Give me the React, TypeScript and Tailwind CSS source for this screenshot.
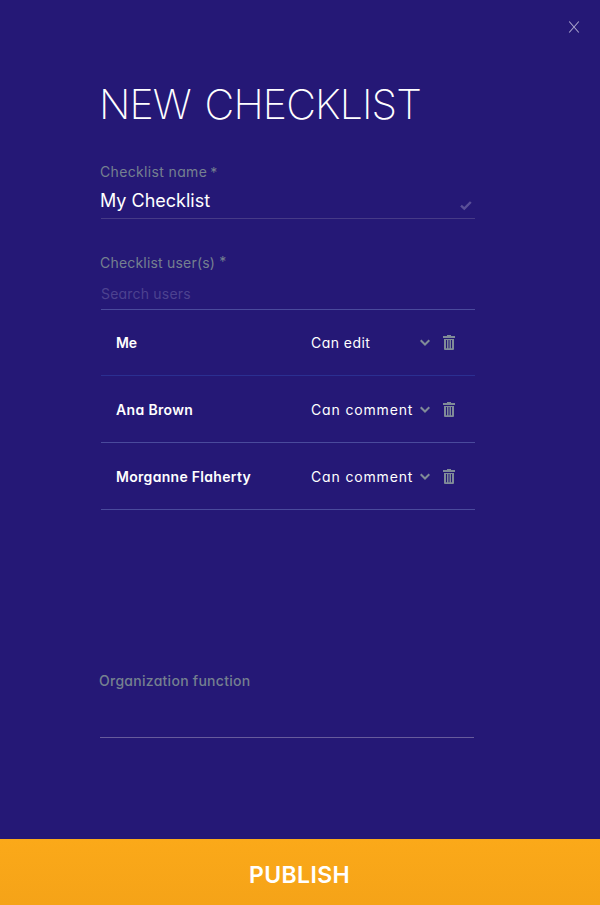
const users = [
  { name: "Me", permission: "Can edit", nameClass: "tracking-[-0.1px]", permissionClass: "tracking-[0.45px]", border: "h-[66px] border-[#2b2f91]" },
  { name: "Ana Brown", permission: "Can comment", nameClass: "tracking-[0.35px]", permissionClass: "tracking-[0.85px]", border: "h-[67px] pt-px border-[#4a4a9c]" },
  { name: "Morganne Flaherty", permission: "Can comment", nameClass: "tracking-[0.3px]", permissionClass: "tracking-[0.85px]", border: "h-[67px] pt-px border-[#4a4a9c]" },
];

const CloseIcon = () => (
  <svg className="w-3 h-3" viewBox="0 0 12 12" fill="none" stroke="#a9a3cc" strokeWidth="1.1">
    <path d="M1.2 0.5L10.8 11.5M10.8 0.5L1.2 11.5" />
  </svg>
);

const CheckIcon = () => (
  <svg className="w-3 h-[10px]" viewBox="0 0 12 10" fill="none" stroke="#5a4f98" strokeWidth="2.4">
    <path d="M1 4.6L4.3 7.6L10.8 1" />
  </svg>
);

const ChevronIcon = () => (
  <svg className="w-[10px] h-[7px]" viewBox="0 0 10 7" fill="none" stroke="#808b98" strokeWidth="2">
    <path d="M0.7 1.3L5 5.5L9.3 1.3" />
  </svg>
);

const TrashIcon = () => (
  <svg className="w-3 h-[15px]" viewBox="0 0 12 15" fill="#808b98">
    <path d="M4 0H8V1H12V3H0V1H4Z" />
    <path fillRule="evenodd" d="M1 4H11V14Q11 15 10 15H2Q1 15 1 14ZM3 5V13.3H4V5ZM5.5 5V13.3H6.5V5ZM8 5V13.3H9V5Z" />
  </svg>
);

export default function App() {
  return (
    <div className="flex flex-col w-[600px] h-[905px] bg-[#251876] text-white whitespace-nowrap font-['Inter','Open_Sans',sans-serif] [font-feature-settings:'cv11']">
      <header className="flex justify-end pt-[21px] pr-5 h-[84px]">
        <button aria-label="Close" className="h-3">
          <CloseIcon />
        </button>
      </header>

      <main className="flex flex-col flex-1 w-[375px] ml-[100px]">
        <h1 className="h-10 text-[41px] leading-10 font-extralight tracking-[-0.85px] [word-spacing:3px] -ml-px">NEW CHECKLIST</h1>

        <section className="mt-[38px]">
          <label className="flex h-5 text-sm leading-5 text-[#758090] tracking-[0.35px]">
            <span>Checklist name</span>
            <span className="ml-[3px] pt-px">*</span>
          </label>
          <div className="flex justify-between h-[37px] ml-px pt-[5px] border-b border-[#463a87]">
            <span className="text-lg leading-7 -ml-px">My Checklist</span>
            <span className="pt-[14px] pr-[3px]">
              <CheckIcon />
            </span>
          </div>
        </section>

        <section className="mt-[34px]">
          <label className="flex h-5 text-sm leading-5 text-[#758090] tracking-[0.2px]">
            <span>Checklist user(s)</span>
            <span className="ml-1 -mt-px">*</span>
          </label>
          <div className="h-[37px] ml-px pt-[11px] border-b border-[#4a4a9c] text-sm leading-5 tracking-[0.2px] text-[#4d4290]">Search users</div>
          <ul className="ml-px">
            {users.map((user) => (
              <li key={user.name} className={`flex items-center border-b pl-[15px] pr-5 text-sm leading-5 ${user.border}`}>
                <span className={`w-[195px] font-semibold ${user.nameClass}`}>{user.name}</span>
                <span className={`w-[109px] ${user.permissionClass}`}>{user.permission}</span>
                <ChevronIcon />
                <span className="ml-[13px]">
                  <TrashIcon />
                </span>
              </li>
            ))}
          </ul>
        </section>

        <section className="mt-[161px] w-[374px]">
          <label className="block h-5 -ml-px text-sm leading-5 font-medium tracking-[0.27px] text-[#758090]">Organization function</label>
          <div className="h-[47px] border-b border-[#675b9c]" />
        </section>
      </main>

      <button className="h-[66px] pt-[6px] pr-px bg-linear-to-b from-[#fba919] to-[#f5a318] text-[23px] leading-none font-semibold tracking-[0.4px]">
        PUBLISH
      </button>
    </div>
  );
}
